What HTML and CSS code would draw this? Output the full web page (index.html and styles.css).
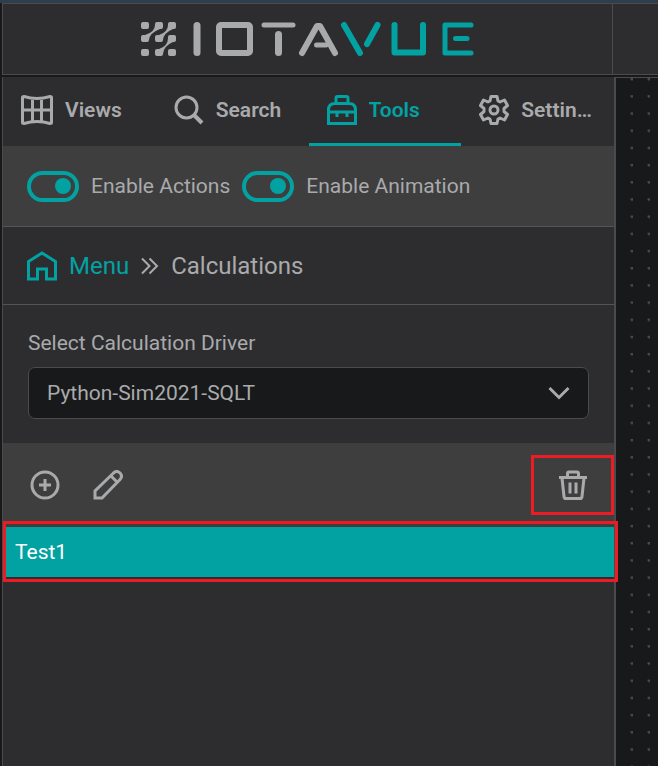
FILE: index.html
```html
<!DOCTYPE html>
<html lang="en">
<head>
    <meta charset="UTF-8">
    <meta name="viewport" content="width=device-width, initial-scale=1.0">
    <title>IOTAVUE - Calculations</title>
    <link rel="stylesheet" href="styles.css">
</head>
<body>

    <header class="header">
        <div class="brand">
            <svg class="logo" width="334" height="36" viewBox="140 21 334 36" role="img" aria-label="IOTAVUE">
                <!-- Mark -->
                <g fill="#a9aaac">
                    <rect x="141" y="22" width="8" height="7" rx="2"/>
                    <rect x="155" y="22" width="8" height="7" rx="2"/>
                    <rect x="168" y="22" width="8" height="7" rx="2"/>
                    <rect x="141" y="35" width="8" height="7" rx="2"/>
                    <rect x="155" y="35" width="8" height="7" rx="2"/>
                    <rect x="168" y="35" width="8" height="7" rx="2"/>
                    <rect x="141" y="49" width="8" height="7" rx="2"/>
                    <rect x="155" y="49" width="8" height="7" rx="2"/>
                    <rect x="168" y="49" width="8" height="7" rx="2"/>
                    <path d="M155 25Q155 32 145 35L149 40Q149.500 33 160 29Z"/>
                    <path d="M168 25Q168 32 159 35L163 40Q163.500 33 173 29Z"/>
                    <path d="M168 38Q168 46 159 49L163 54Q163.500 46 173 42Z"/>
                </g>
                <!-- Wordmark -->
                <g fill="none" stroke="#a9aaac" stroke-width="6" stroke-linecap="round" stroke-linejoin="round">
                    <line x1="197" y1="25.5" x2="197" y2="52.5" stroke-width="7"/>
                    <rect x="219" y="25" width="31" height="28" rx="2"/>
                    <line x1="264" y1="25" x2="293" y2="25" stroke-width="5"/>
                    <line x1="278.5" y1="34.5" x2="278.5" y2="52.5" stroke-width="7"/>
                    <polyline points="302,53 317,26 320,26 335,53"/>
                    <line x1="316.5" y1="45" x2="326" y2="45" stroke-width="5"/>
                </g>
                <g fill="none" stroke="#02a2a3" stroke-width="6" stroke-linecap="round" stroke-linejoin="round">
                    <line x1="344" y1="25" x2="360" y2="53"/>
                    <line x1="377.5" y1="25" x2="367" y2="44"/>
                    <polyline points="394.5,25 394.5,52.5 423,52.5 423,25"/>
                    <polyline points="471,25 445,25 445,53 471,53" stroke-width="5"/>
                    <line x1="455.5" y1="38.5" x2="467" y2="38.5" stroke-width="5"/>
                </g>
            </svg>
        </div>
        <div class="header-rest"></div>
    </header>

    <div class="workspace">
        <main class="panel">
            <nav class="tabs">
                <button class="tab" type="button">
                    <svg class="icon icon-wide" viewBox="0 0 32 30">
                        <path d="M1.500 2.500Q1.500 1.500 3 1.500Q16 5.500 29 1.500Q30.500 1.500 30.500 2.500V27.500Q30.500 28.500 29 28.500Q16 24.500 3 28.500Q1.500 28.500 1.500 27.500ZM1.500 15H30.500M11.500 3.500V26.500M20.500 3.500V26.500"/>
                    </svg>
                    <span class="tab-label">Views</span>
                </button>
                <button class="tab" type="button">
                    <svg class="icon" viewBox="0 0 30 30">
                        <circle cx="12.5" cy="12.500" r="10.500"/>
                        <path d="M20 20L28 28" stroke-width="4"/>
                    </svg>
                    <span class="tab-label">Search</span>
                </button>
                <button class="tab active" type="button">
                    <svg class="icon" viewBox="0 0 30 30">
                        <path d="M9 8V3Q9 1.500 10.500 1.500H19.500Q21 1.500 21 3V8M1.500 28.500V15Q1.500 8.500 8 8.500H22Q28.500 8.500 28.500 15V28.500ZM1.500 17H28.500M10 17V22M20 17V22"/>
                    </svg>
                    <span class="tab-label">Tools</span>
                </button>
                <button class="tab" type="button">
                    <svg class="icon" viewBox="0 0 30 30">
                        <path d="M12 1.500H18L19 6L21 7L25.500 5L28.500 10.500L25 13.500V16.500L28.500 19.500L25.500 25L21 23L19 24L18 28.500H12L11 24L9 23L4.500 25L1.500 19.500L5 16.500V13.500L1.500 10.500L4.500 5L9 7L11 6Z" stroke-linejoin="round"/>
                        <circle cx="15" cy="15" r="4"/>
                    </svg>
                    <span class="tab-label">Settings</span>
                </button>
            </nav>

            <div class="options">
                <input class="toggle" type="checkbox" id="enable-actions" checked>
                <label for="enable-actions">Enable Actions</label>
                <input class="toggle" type="checkbox" id="enable-animation" checked>
                <label for="enable-animation">Enable Animation</label>
            </div>

            <nav class="breadcrumb">
                <a class="menu-link" href="#">
                    <svg class="icon" viewBox="0 0 30 30">
                        <path d="M1.500 28V10.500L15 2L28.500 10.500V28H19.500V18H10.500V28Z"/>
                    </svg>
                    Menu
                </a>
                <svg class="chevrons" viewBox="0 0 18 18">
                    <path d="M1 1.500L8.500 9L1 16.500M8.500 1.500L16 9L8.500 16.500"/>
                </svg>
                <span>Calculations</span>
            </nav>

            <div class="driver">
                <label for="driver">Select Calculation Driver</label>
                <div class="select-box">
                    <select id="driver">
                        <option>Python-Sim2021-SQLT</option>
                    </select>
                    <svg class="arrow" viewBox="0 0 22 14">
                        <path d="M1.500 2L11 11.500L20.500 2"/>
                    </svg>
                </div>
            </div>

            <div class="actions">
                <button class="action" type="button" aria-label="Add">
                    <svg class="icon" viewBox="0 0 30 30">
                        <circle cx="15" cy="15" r="13"/>
                        <path d="M15 9V21M9 15H21"/>
                    </svg>
                </button>
                <button class="action" type="button" aria-label="Edit">
                    <svg class="icon" viewBox="0 0 30 30">
                        <path d="M2 28V21L20.500 3Q24 0 27 3Q30 6 27 9.500L9 28ZM18 6L24.500 12.500"/>
                    </svg>
                </button>
                <button class="action delete" type="button" aria-label="Delete">
                    <svg class="icon" viewBox="0 0 30 30">
                        <path d="M1 7.500H29M9.500 7V3.500Q9.500 2 11 2H19Q20.500 2 20.500 3.500V7M4 8L6 26.500Q6.200 28.500 8 28.500H22Q23.800 28.500 24 26.500L26 8M12 12.500V23.500M18 12.500V23.500"/>
                    </svg>
                </button>
            </div>

            <ul class="list">
                <li><button class="list-item" type="button">Test1</button></li>
            </ul>
        </main>
        <div class="canvas"></div>
    </div>

</body>
</html>
```
FILE: styles.css
```css
* {
    box-sizing: border-box;
}
body {
    margin: 0;
    min-height: 100vh;
    display: flex;
    flex-direction: column;
    background-color: #18191b;
    border-top: 3px solid #2f3e4d;
    color: #a9aaac;
    font-family: Roboto, sans-serif;
    font-size: 21px;
}
button,
select {
    font: inherit;
    color: inherit;
    cursor: pointer;
}
button {
    padding: 0;
    border: none;
    background: none;
}
.header {
    display: flex;
    height: 72px;
    margin: 0 0 2px 2px;
    background-color: #2d2d2f;
    border: 1px solid #4b4b4d;
    border-right: none;
}
.brand {
    flex: 1;
    display: flex;
    align-items: center;
    justify-content: center;
    padding-right: 2px;
    border-right: 1px solid #4b4b4d;
}
.header-rest {
    width: 45px;
}
.workspace {
    flex: 1;
    display: flex;
}
.panel {
    flex: 1;
    min-width: 0;
    margin-left: 2px;
    background-color: #2d2d2f;
    border-left: 1px solid #4b4b4d;
    border-right: 2px solid #4b4b4d;
}
/* Dotted drawing surface */
.canvas {
    width: 42px;
    border-top: 1px solid #4b4b4d;
    background-image: radial-gradient(circle at 16px 1px, #4b4b4d 0, #4b4b4d 1px, transparent 2px);
    background-size: 17px 17px;
    background-repeat: repeat round;
}
.icon {
    width: 30px;
    height: 30px;
    flex: none;
    fill: none;
    stroke: currentColor;
    stroke-width: 3;
}
.icon-wide {
    width: 32px;
}

/* Tabs */
.tabs {
    display: flex;
    height: 69px;
}
.tab {
    flex: 1;
    min-width: 0;
    display: flex;
    align-items: center;
    gap: 12px;
    padding: 0 18px;
    border-bottom: 3px solid transparent;
    font-weight: 600;
    text-align: left;
}
.tab.active {
    color: #02a2a3;
    border-bottom-color: #02a2a3;
}
.tab-label {
    overflow: hidden;
    text-overflow: ellipsis;
    white-space: nowrap;
}

/* Toggles */
.options {
    display: flex;
    align-items: center;
    gap: 12px;
    height: 81px;
    padding: 0 24px;
    background-color: #3e3e3f;
    border-bottom: 1px solid #545456;
}
.toggle {
    appearance: none;
    width: 52px;
    height: 31px;
    margin: 0;
    border: 4px solid #02a2a3;
    border-radius: 16px;
    display: flex;
    align-items: center;
    padding: 0 4px;
    cursor: pointer;
}
.toggle::before {
    content: "";
    width: 16px;
    height: 16px;
    border-radius: 50%;
    background-color: #02a2a3;
}
.toggle:checked {
    justify-content: flex-end;
}

/* Breadcrumb */
.breadcrumb {
    display: flex;
    align-items: center;
    gap: 12px;
    height: 78px;
    padding: 0 24px;
    border-bottom: 1px solid #545456;
    font-size: 24px;
}
.menu-link {
    display: flex;
    align-items: center;
    gap: 12px;
    color: #02a2a3;
    text-decoration: none;
}
.chevrons {
    width: 18px;
    height: 18px;
    fill: none;
    stroke: currentColor;
    stroke-width: 2;
}

/* Driver */
.driver {
    display: flex;
    flex-direction: column;
    gap: 12px;
    padding: 26px 25px 24px;
}
.select-box {
    display: grid;
    align-items: center;
}
.select-box select,
.select-box .arrow {
    grid-area: 1 / 1;
}
.select-box select {
    appearance: none;
    width: 100%;
    height: 52px;
    padding: 0 48px 0 18px;
    background-color: #18191b;
    border: 1px solid #4b4b4d;
    border-radius: 7px;
}
.arrow {
    width: 22px;
    height: 14px;
    margin-right: 19px;
    justify-self: end;
    pointer-events: none;
    fill: none;
    stroke: currentColor;
    stroke-width: 3;
}

/* Actions */
.actions {
    display: flex;
    align-items: center;
    height: 84px;
    padding-left: 10px;
    background-color: #3e3e3f;
}
.action {
    display: flex;
    align-items: center;
    justify-content: center;
    width: 63px;
    height: 60px;
}
.delete {
    width: 83px;
    margin-left: auto;
    border: 3px solid #ed1c24;
}

/* List */
.list {
    position: relative;
    margin: 0;
    padding: 0;
    list-style: none;
}
.list::after {
    content: "";
    position: absolute;
    inset: -6px -4px -5px 0;
    border: 3px solid #ed1c24;
    pointer-events: none;
}
.list-item {
    display: block;
    width: 100%;
    height: 50px;
    padding: 0 12px;
    background-color: #02a2a3;
    color: #fff;
    text-align: left;
}
```
